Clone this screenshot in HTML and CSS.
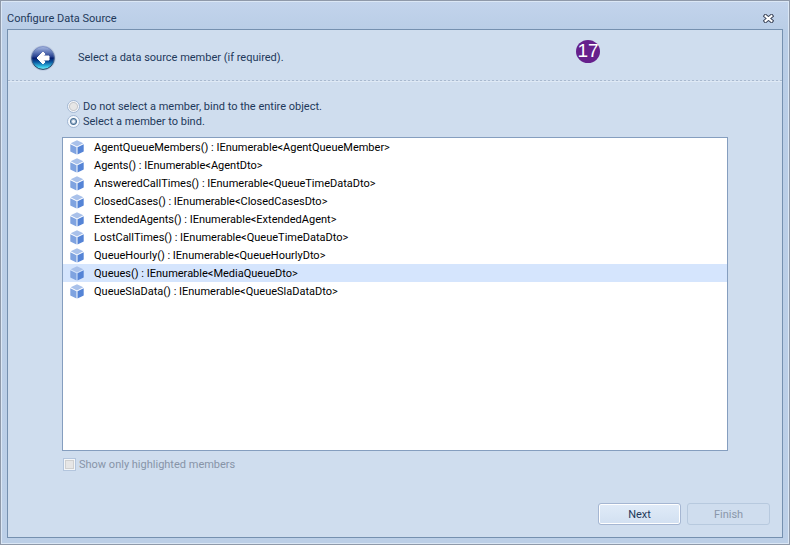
FILE: index.html
```html
<!DOCTYPE html>
<html lang="en">
<head>
<meta charset="UTF-8">
<meta name="viewport" content="width=device-width, initial-scale=1.0">
<title>Configure Data Source</title>
<link rel="stylesheet" href="styles.css">
</head>
<body>

<!-- shared icons -->
<svg class="defs" width="0" height="0" aria-hidden="true">
  <symbol id="cube" viewBox="0 0 14 15">
    <path fill="#a9c1ea" d="M7 0.3 L13.3 3.2 L7 6.4 L0.7 3.2 Z"/>
    <path fill="#7fa3e0" d="M0.3 4.2 L6.5 7.3 L6.5 14.6 L0.3 11.4 Z"/>
    <path fill="#5584d6" d="M13.7 4.2 L7.5 7.3 L7.5 14.6 L13.7 11.4 Z"/>
  </symbol>
</svg>

<div class="window">
  <div class="titlebar">
    <h1>Configure Data Source</h1>
    <button class="close" type="button" aria-label="Close">
      <svg width="11" height="9" viewBox="0 0 11 9">
        <path d="M2.5 2 L8.5 7 M8.5 2 L2.5 7" stroke="#3a4358" stroke-width="4" stroke-linecap="square"/>
        <path d="M2.5 2 L8.5 7 M8.5 2 L2.5 7" stroke="#fff" stroke-width="2" stroke-linecap="square"/>
      </svg>
    </button>
  </div>

  <form class="wizard">
    <div class="header">
      <button class="back" type="button" aria-label="Back">
        <svg width="26" height="26" viewBox="0 0 26 26">
          <defs>
            <linearGradient id="ball" x1="0" y1="0" x2="0" y2="1">
              <stop offset="0" stop-color="#a9b9e2"/>
              <stop offset="0.25" stop-color="#6078b8"/>
              <stop offset="0.46" stop-color="#233c8c"/>
              <stop offset="0.5" stop-color="#03186a"/>
              <stop offset="0.68" stop-color="#0b58a0"/>
              <stop offset="0.88" stop-color="#35c3e6"/>
              <stop offset="1" stop-color="#8cf2fa"/>
            </linearGradient>
            <linearGradient id="rim" x1="0" y1="0" x2="0" y2="1">
              <stop offset="0" stop-color="#7f92c8"/>
              <stop offset="1" stop-color="#1b3f5e"/>
            </linearGradient>
          </defs>
          <circle cx="13" cy="13" r="12.6" fill="#b5c2da"/>
          <circle cx="13" cy="13" r="11.4" fill="url(#ball)" stroke="url(#rim)"/>
          <path fill="#fff" stroke="#fff" stroke-linejoin="round" d="M7 13 L13 7 L15 9 L13.4 11 H19 V15 H13.4 L15 17 L13 19 Z"/>
        </svg>
      </button>
      <h2>Select a data source member (if required).</h2>
      <span class="step">17</span>
    </div>

    <div class="content">
      <div class="options">
        <label><input type="radio" name="bind"> Do not select a member, bind to the entire object.</label>
        <label><input type="radio" name="bind" checked> Select a member to bind.</label>
      </div>

      <ul class="members">
        <li><svg><use href="#cube"/></svg>AgentQueueMembers() : IEnumerable&lt;AgentQueueMember&gt;</li>
        <li><svg><use href="#cube"/></svg>Agents() : IEnumerable&lt;AgentDto&gt;</li>
        <li><svg><use href="#cube"/></svg>AnsweredCallTimes() : IEnumerable&lt;QueueTimeDataDto&gt;</li>
        <li><svg><use href="#cube"/></svg>ClosedCases() : IEnumerable&lt;ClosedCasesDto&gt;</li>
        <li><svg><use href="#cube"/></svg>ExtendedAgents() : IEnumerable&lt;ExtendedAgent&gt;</li>
        <li><svg><use href="#cube"/></svg>LostCallTimes() : IEnumerable&lt;QueueTimeDataDto&gt;</li>
        <li><svg><use href="#cube"/></svg>QueueHourly() : IEnumerable&lt;QueueHourlyDto&gt;</li>
        <li class="selected"><svg><use href="#cube"/></svg>Queues() : IEnumerable&lt;MediaQueueDto&gt;</li>
        <li><svg><use href="#cube"/></svg>QueueSlaData() : IEnumerable&lt;QueueSlaDataDto&gt;</li>
      </ul>

      <label class="highlighted"><input type="checkbox" disabled> Show only highlighted members</label>
    </div>

    <div class="buttons">
      <button type="button">Next</button>
      <button type="button" disabled>Finish</button>
    </div>
  </form>
</div>

</body>
</html>
```

FILE: styles.css
```css
* {
  box-sizing: border-box;
}

body {
  margin: 0;
  font-family: Tahoma, Roboto, sans-serif;
  font-size: 11px;
  line-height: 15px;
  color: #1e395b;
}

button, input {
  font: inherit;
  color: inherit;
  margin: 0;
}

h1, h2 {
  margin: 0;
  font-size: 11px;
  font-weight: normal;
}

.defs {
  position: absolute;
}

/* window frame */
.window {
  display: flex;
  flex-direction: column;
  min-height: 100vh;
  padding: 0 6px 6px;
  border: 1px solid #8f99a9;
  background: linear-gradient(#c3d4ec, #b9cde6 30px, #bccfe7);
  box-shadow: inset 0 0 0 1px #dbe7f5;
}

.titlebar {
  display: flex;
  align-items: center;
  justify-content: space-between;
  height: 28px;
  padding-top: 6px;
}

.close {
  display: flex;
  padding: 0;
  margin-right: 9px;
  border: none;
  background: none;
}

.wizard {
  flex: 1;
  display: flex;
  flex-direction: column;
  border: 1px solid #7590af;
  background: #cfddee;
}

/* header */
.header {
  position: relative;
  display: flex;
  align-items: center;
  gap: 22px;
  height: 52px;
  padding: 4px 22px 0;
  border-bottom: 1px solid #dfe9f5;
}

.header::after {
  content: "";
  position: absolute;
  left: 0;
  right: 0;
  bottom: 0;
  height: 1px;
  background: repeating-linear-gradient(90deg, #a9b9cf 0 2px, #cfddee 2px 4px);
}

.back {
  display: flex;
  padding: 0;
  border: none;
  background: none;
}

/* step marker */
.step {
  position: absolute;
  left: 568px;
  top: 10px;
  width: 24px;
  height: 23px;
  border-radius: 50%;
  background: #66208c;
  color: #fff;
  font: 19px/22px "Liberation Sans", Arial, sans-serif;
  text-align: center;
}

/* content */
.content {
  flex: 1;
  display: flex;
  flex-direction: column;
  padding: 17px 54px 0;
}

label {
  display: flex;
  align-items: center;
  gap: 3px;
}

.options {
  padding-left: 5px;
}

input[type="radio"] {
  appearance: none;
  width: 13px;
  height: 13px;
  border: 1px solid #a3b8d4;
  border-radius: 50%;
  background: radial-gradient(circle, #e6e6e6 3px, #c6c8cc 4px, #f4f6fa 5px);
}

input[type="radio"]:checked {
  background: radial-gradient(circle, #eef4fb 1px, #4a7095 3px, #f4f8fd 4px);
}

.members {
  flex: 1;
  margin: 8px 0 0;
  padding: 0;
  border: 1px solid #859ebf;
  background: #fff;
  color: #000;
  list-style: none;
}

.members li {
  display: flex;
  align-items: center;
  gap: 10px;
  height: 18px;
  padding-left: 7px;
}

.members svg {
  width: 14px;
  height: 15px;
}

.members .selected {
  background: #d5e5fd;
}

.highlighted {
  margin-top: 6px;
  padding-left: 1px;
  color: #8794a8;
}

input[type="checkbox"] {
  appearance: none;
  width: 13px;
  height: 13px;
  border: 1px solid #b3c5dd;
  background: #e6e6e6;
  box-shadow: inset 0 0 0 1px #f4f6f8, inset 0 0 0 2px #d0d0d0;
}

/* buttons */
.buttons {
  display: flex;
  justify-content: flex-end;
  gap: 6px;
  padding: 31px 12px 12px;
}

.buttons button {
  width: 83px;
  height: 22px;
  padding: 0;
  border: 1px solid #a5b6d2;
  border-radius: 3px;
  background: linear-gradient(#e0ebf8, #d2e0f1);
  box-shadow: inset 0 0 0 1px #fff;
}

.buttons button:disabled {
  border-color: #b7c9de;
  background: none;
  box-shadow: none;
  color: #8a97aa;
}
```
